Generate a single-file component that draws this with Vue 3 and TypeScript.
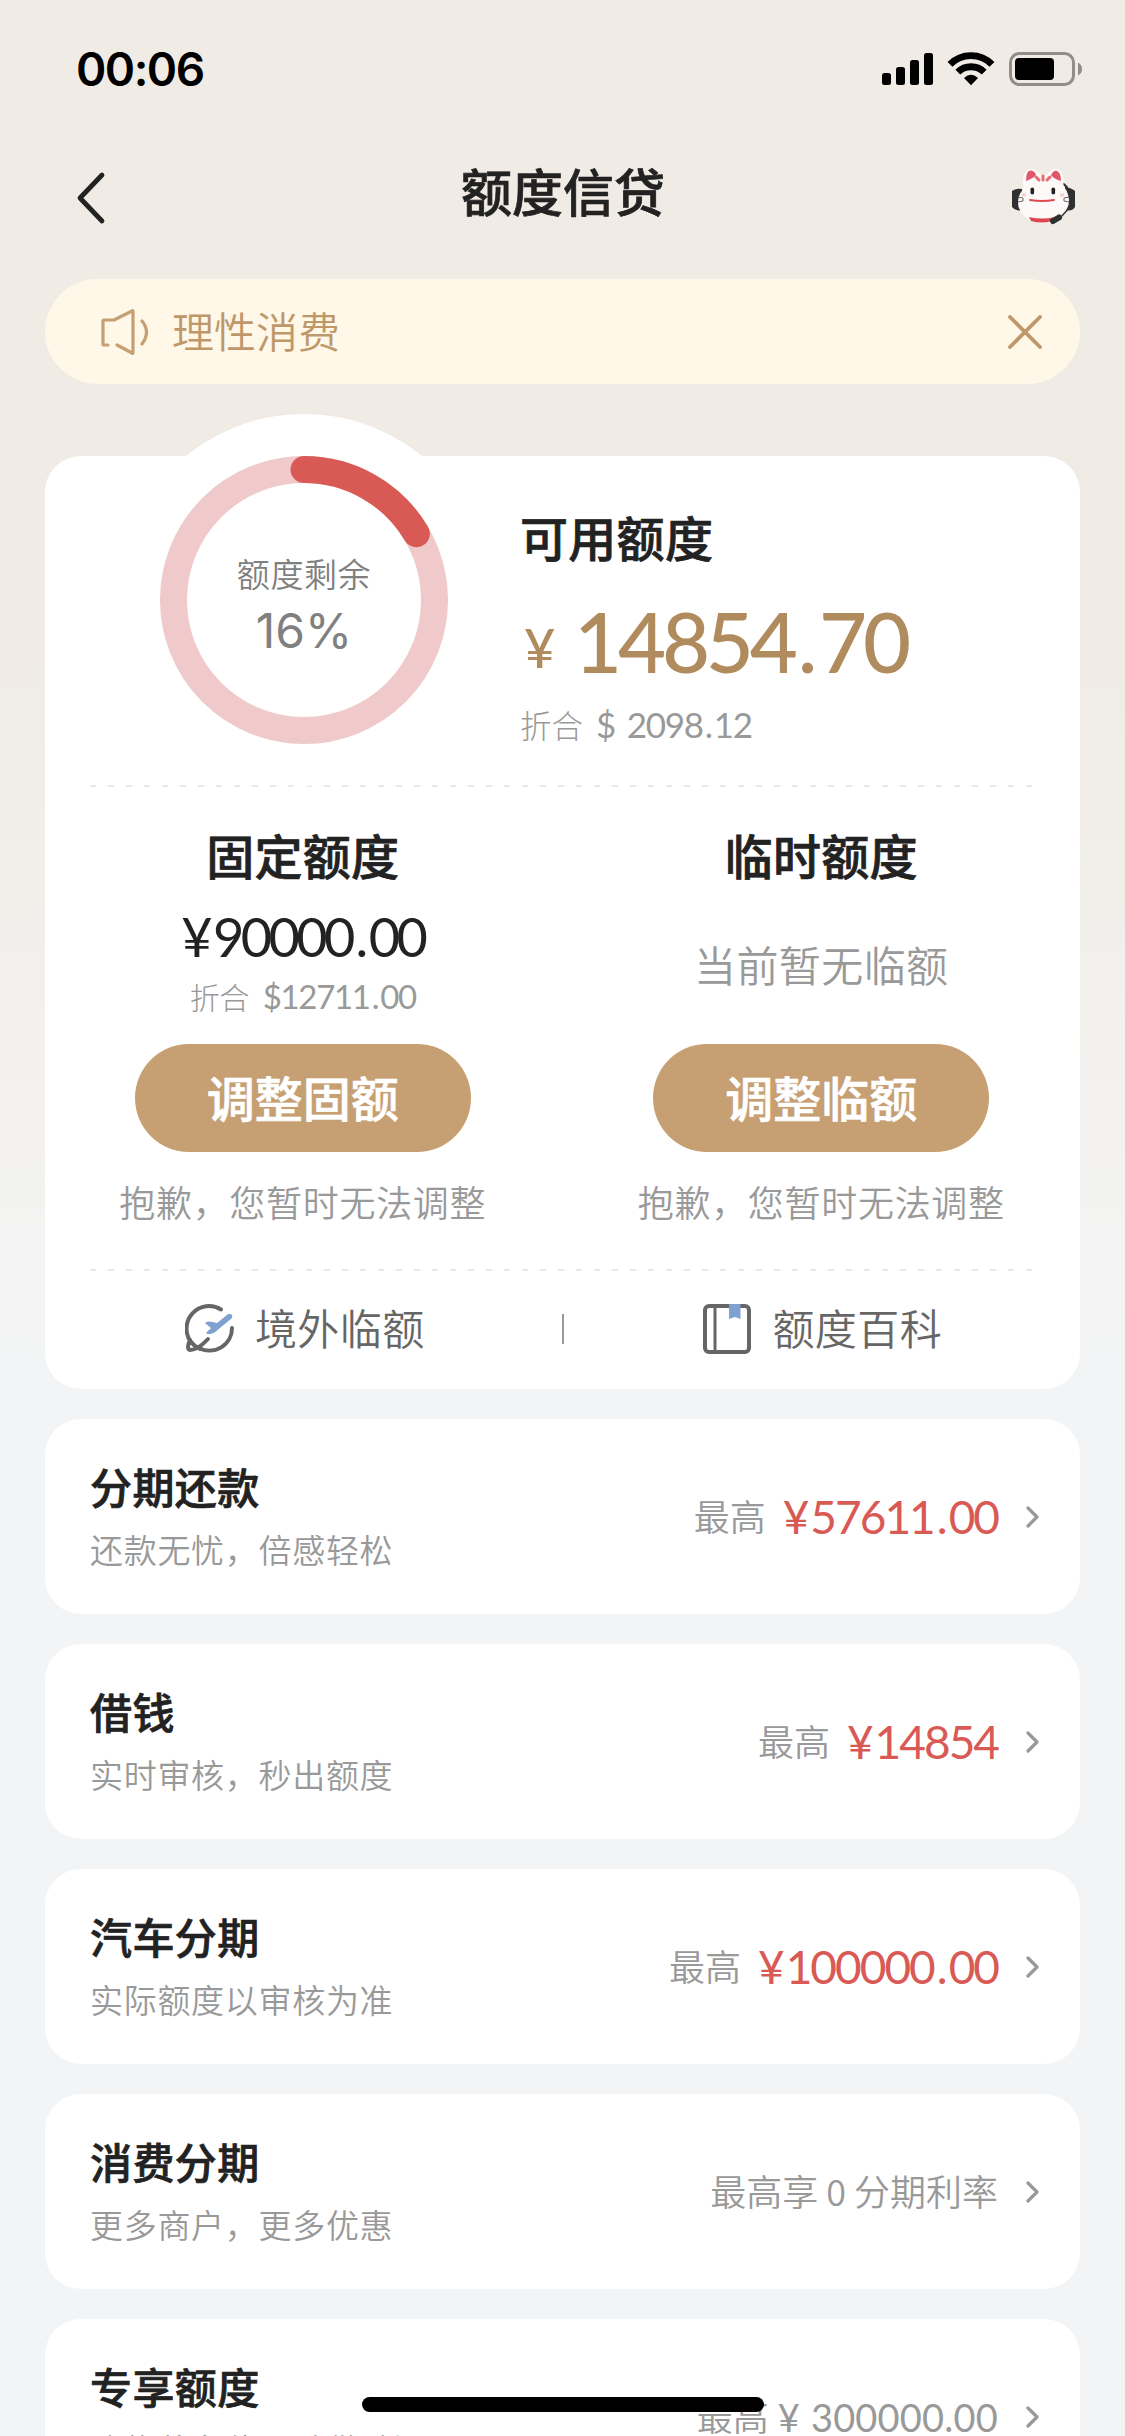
<script setup lang="ts">
interface Product {
  title: string
  desc: string
  label: string
  amount?: string[]
  muted?: boolean
}

const products: Product[] = [
  { title: '分期还款', desc: '还款无忧，倍感轻松', label: '最高', amount: ['57611', '00'] },
  { title: '借钱', desc: '实时审核，秒出额度', label: '最高', amount: ['14854'] },
  { title: '汽车分期', desc: '实际额度以审核为准', label: '最高', amount: ['100000', '00'] },
  { title: '消费分期', desc: '更多商户，更多优惠', label: '最高享 0 分期利率' },
  { title: '专享额度', desc: '购物装车位，随借随还', label: '最高', amount: ['300000', '00'], muted: true },
]

const radius = 130.5
const circumference = 2 * Math.PI * radius
const remaining = 0.165
</script>

<template>
  <div class="screen">
    <div class="status">
      <span class="time">00:06</span>
      <svg class="status-icons" width="202" height="36" viewBox="0 0 202 36">
        <rect x="0" y="21" width="9" height="12" rx="2.5" />
        <rect x="14" y="15" width="9" height="18" rx="2.5" />
        <rect x="28" y="8" width="9" height="25" rx="2.5" />
        <rect x="42" y="1" width="9" height="32" rx="2.5" />
        <g fill="none" stroke="#000" stroke-width="6.800">
          <path d="M68 12.300A29.700 29.700 0 0 1 110 12.300" />
          <path d="M75.800 20.200A18.700 18.700 0 0 1 102.200 20.200" />
        </g>
        <path d="M82 26Q89 19.500 96 26L89 33.200Z" />
        <rect x="128.500" y="1.500" width="63" height="31" rx="9" fill="none" stroke="#918e8a" stroke-width="3" />
        <rect x="133" y="6" width="39" height="22" rx="4" />
        <path d="M196 10.500Q200 12.500 200 17T196 23.500Z" fill="#918e8a" />
      </svg>
    </div>

    <header class="nav">
      <svg width="30" height="54" viewBox="0 0 30 54" fill="none" stroke="#222" stroke-width="4.800" stroke-linecap="round" stroke-linejoin="round">
        <path d="M26 4L4 27L26 50" />
      </svg>
      <h1>额度信贷</h1>
      <svg class="cat" width="64" height="58" viewBox="0 0 64 58">
        <path d="M0 22Q4 19 10 20V41Q4 43 0 38Z" fill="#303032" />
        <path d="M63 22Q60 19 53 18V41Q60 43 63 38Z" fill="#303032" />
        <path d="M50 14Q56 17 57 25" stroke="#303032" stroke-width="2" fill="none" />
        <path d="M12 20Q10 0 19 0Q25 1 29 7H34Q38 1 44 0Q52 1 51 17Q58 26 56 36Q51 53 31 54Q12 53 7 38Q5 27 12 20Z" fill="#fcf9f8" stroke="#fffdfc" />
        <path d="M14 12Q14 1 19 1.500Q23 2 24 6Q22 9 14 12Z" fill="#e0566a" />
        <path d="M39 6Q41 2 44 1.500Q49 3 49 12Q42 10 39 6Z" fill="#e0566a" />
        <path d="M24 8L27 11M31 7V11M38 8L35 11" stroke="#e66c72" stroke-width="3" stroke-linecap="round" />
        <rect x="18.500" y="18.500" width="3.600" height="7" rx="1.800" fill="#222" />
        <rect x="39.500" y="18.500" width="3.600" height="7" rx="1.800" fill="#222" />
        <path d="M18 31Q30 33 42 31" stroke="#dd4b52" stroke-width="2" fill="none" stroke-linecap="round" />
        <path d="M10 26h4M48 26h4" stroke="#f7cfcc" stroke-width="3" />
        <path d="M6 28L11 29V32L6 33M57 28L52 29V32L57 33" stroke="#666" stroke-width="1" fill="none" />
        <path d="M17 48Q30 51 43 48L40 52Q30 55 19 52Z" fill="#e0444f" />
        <path d="M58 38L48 49" stroke="#333" stroke-width="1.500" />
        <path d="M41 52L47 48.500" stroke="#303032" stroke-width="6" stroke-linecap="round" />
      </svg>
    </header>

    <div class="notice">
      <svg width="50" height="48" viewBox="0 0 50 48" fill="none" stroke="#c6a073" stroke-width="3.200" stroke-linecap="round" stroke-linejoin="round">
        <path d="M7 37H3Q2 37 2 36V13Q2 12 3 12H13L31 3Q32 2 32 4V44Q32 46 31 45L16 37" />
        <path d="M41 13Q50 24 41 36" />
      </svg>
      <span class="notice-text">理性消费</span>
      <svg width="34" height="34" viewBox="0 0 34 34" fill="none" stroke="#bf986a" stroke-width="3.800" stroke-linecap="round">
        <path d="M2 2L32 32M32 2L2 32" />
      </svg>
    </div>

    <section class="quota">
      <div class="summary">
        <div class="ring">
          <svg width="372" height="372" viewBox="0 0 372 372">
            <circle cx="186" cy="186" r="186" fill="#fff" />
            <circle cx="186" cy="186" :r="radius" fill="none" stroke="#f0cacb" stroke-width="27" />
            <circle
              cx="186" cy="186" :r="radius" fill="none" stroke="#d95a55" stroke-width="27" stroke-linecap="round"
              :stroke-dasharray="`${circumference * remaining} ${circumference}`" transform="rotate(-90 186 186)"
            />
          </svg>
          <div class="ring-text">
            <span class="ring-label">额度剩余</span>
            <span class="ring-value">16%</span>
          </div>
        </div>
        <div class="available">
          <h2>可用额度</h2>
          <div class="total"><span class="yen">¥</span><span class="total-num">14854<span class="dot">.</span>70</span></div>
          <div class="convert"><span class="thin">折合</span><span class="usd">$ 2098<span class="dot">.</span>12</span></div>
        </div>
      </div>

      <div class="dash"></div>

      <div class="columns">
        <div class="column">
          <h2>固定额度</h2>
          <div class="fixed-amount"><span class="sign">¥</span>90000<span class="dot">.</span>00</div>
          <div class="fixed-convert"><span class="thin">折合</span><span class="usd">$12711<span class="dot">.</span>00</span></div>
          <button>调整固额</button>
          <p>抱歉，您暂时无法调整</p>
        </div>
        <div class="column">
          <h2>临时额度</h2>
          <div class="empty">当前暂无临额</div>
          <button>调整临额</button>
          <p>抱歉，您暂时无法调整</p>
        </div>
      </div>

      <div class="dash"></div>

      <div class="links">
        <div class="link">
          <svg width="50" height="52" viewBox="0 0 50 52" fill="none" stroke="#666" stroke-width="4" stroke-linecap="round">
            <path d="M36 6.500A22.500 22.500 0 0 0 6 39M14 45A22.500 22.500 0 0 0 47 25" />
            <path d="M5 37Q1 46 5 47Q13 47 23 36M6 39Q9 43 15 46" />
            <path d="M43 12Q48 11 46 15L29 29Q26 31 22 30L27 25L21 20Q24 18 32 21L43 12Z" fill="#7fa1d0" stroke="#7fa1d0" stroke-width="1.500" stroke-linejoin="round" />
          </svg>
          <span>境外临额</span>
        </div>
        <i class="divider"></i>
        <div class="link">
          <svg width="50" height="52" viewBox="0 0 50 52" fill="none" stroke="#666" stroke-width="4">
            <rect x="3" y="3" width="44" height="46" rx="4" />
            <path d="M13 3V49" stroke-width="3" />
            <path d="M27 1H38.500V16L33 14L27 16Z" fill="#7fa1d0" stroke="none" />
          </svg>
          <span>额度百科</span>
        </div>
      </div>
    </section>

    <article v-for="p in products" :key="p.title" class="product">
      <div class="product-main">
        <h3>{{ p.title }}</h3>
        <div class="desc">{{ p.desc }}</div>
      </div>
      <span class="label">{{ p.label }}</span>
      <span v-if="p.amount" class="amount" :class="{ muted: p.muted }"><span class="sign">¥</span>{{ p.amount[0] }}<template v-if="p.amount[1]"><span class="dot">.</span>{{ p.amount[1] }}</template></span>
      <svg width="14" height="22" viewBox="0 0 14 22" fill="none" stroke="#999" stroke-width="3.200" stroke-linecap="round" stroke-linejoin="round">
        <path d="M2 2L11 11L2 20" />
      </svg>
    </article>

    <div class="home-bar"></div>
  </div>
</template>

<style>
body {
  margin: 0;
  background: #f2f4f6;
}
</style>

<style scoped>
.screen {
  position: relative;
  box-sizing: border-box;
  width: 1125px;
  height: 2436px;
  padding: 0 45px;
  overflow: hidden;
  display: flex;
  flex-direction: column;
  background: linear-gradient(#f0ece5 0, #f0ece5 650px, #f4f4f4 1300px, #f2f4f6 1420px);
  color: #222;
  font-family: "Noto Sans CJK SC", sans-serif;
  font-weight: 350;
}
.screen > * {
  flex-shrink: 0;
}
h1, h2, h3, p {
  margin: 0;
}
h1, h2, h3, button {
  -webkit-text-stroke: 0.7px currentColor;
}
.status {
  display: flex;
  justify-content: space-between;
  align-items: center;
  height: 138px;
  padding-left: 31px;
}
.time {
  color: #000;
  font: 600 46px/60px Inter, sans-serif;
  letter-spacing: -1.5px;
}
.status-icons {
  margin-right: -4px;
  margin-top: 2px;
}
.nav {
  display: flex;
  align-items: center;
  justify-content: space-between;
  height: 120px;
  padding: 0 4px 0 31px;
}
h1 {
  font-size: 51px;
  line-height: 60px;
  font-weight: 500;
  margin-left: 8px;
  margin-top: -17px;
}
.notice {
  display: flex;
  align-items: center;
  height: 105px;
  margin-top: 21px;
  padding: 0 38px 0 56px;
  border-radius: 53px;
  background: #fff7e8;
}
.notice-text {
  flex: 1;
  margin-left: 21px;
  margin-top: -4px;
  color: #bf986a;
  font-size: 42px;
  line-height: 50px;
}
.quota {
  margin-top: 72px;
  height: 933px;
  border-radius: 36px;
  background: #fff;
}
.summary {
  display: flex;
  height: 329px;
}
.ring {
  position: relative;
  width: 372px;
  height: 372px;
  margin: -42px 0 0 73px;
}
.ring svg {
  display: block;
}
.ring-text {
  position: absolute;
  inset: 0;
  display: flex;
  flex-direction: column;
  align-items: center;
  padding-top: 134px;
  color: #808080;
}
.ring-label {
  font-size: 33px;
  line-height: 50px;
  letter-spacing: 0.6px;
}
.ring-value {
  font: 400 48px/56px Inter, sans-serif;
  margin-top: 5px;
}
.available {
  margin-left: 30px;
  padding-top: 50px;
}
h2 {
  font-size: 48px;
  line-height: 60px;
  font-weight: 500;
  letter-spacing: 0.3px;
}
.total {
  display: flex;
  height: 100px;
  margin-top: 25px;
  color: #b08b5e;
  font-family: Lato, sans-serif;
  font-weight: 500;
}
.yen {
  width: 50px;
  padding-left: 4px;
  font-size: 54px;
  line-height: 113px;
}
.total-num {
  font-size: 83px;
  line-height: 100px;
  letter-spacing: -4.200px;
}
.total-num .dot {
  margin: 0 6px 0 4px;
}
.convert,
.fixed-convert {
  display: flex;
  align-items: baseline;
  color: #999;
}
.convert {
  margin-top: 11px;
}
.thin {
  font-size: 31.500px;
  line-height: 44px;
  font-weight: 300;
}
.usd {
  margin-left: 13px;
  font: 400 35px/44px Lato, sans-serif;
  letter-spacing: -1.300px;
  word-spacing: 4px;
}
.usd .dot {
  margin: 0 2px;
}
.dash {
  height: 2px;
  margin: 0 45px;
  background: repeating-linear-gradient(90deg, #e8e8e8 0 6px, transparent 6px 18px);
}
.columns {
  display: flex;
  height: 482px;
}
.column {
  flex: 1;
  display: flex;
  flex-direction: column;
  align-items: center;
  padding-top: 37px;
}
.column:first-child {
  margin-left: -1px;
  padding-right: 1px;
}
.fixed-amount {
  height: 60px;
  margin-top: 23px;
  font: 400 54px/60px Lato, sans-serif;
  letter-spacing: -3.600px;
}
.fixed-amount .sign {
  margin-right: 4px;
}
.fixed-amount .dot {
  margin: 0 4px;
}
.fixed-convert {
  height: 44px;
  margin-top: 7px;
  margin-bottom: 26px;
}
.fixed-convert .thin {
  font-size: 30px;
}
.fixed-convert .usd {
  font-size: 33px;
}
.empty {
  height: 60px;
  margin-top: 50px;
  margin-bottom: 50px;
  color: #999;
  font-size: 42px;
  line-height: 60px;
  letter-spacing: 0.4px;
}
button {
  width: 336px;
  height: 108px;
  padding: 0 0 4px;
  border: 0;
  border-radius: 54px;
  background: #c6a073;
  color: #fff;
  font: 500 48px/104px "Noto Sans CJK SC", sans-serif;
}
p {
  margin-top: 24px;
  color: #999;
  font-size: 36px;
  line-height: 50px;
  letter-spacing: 0.7px;
}
.links {
  display: flex;
  align-items: center;
  height: 116px;
}
.link {
  flex: 1;
  display: flex;
  align-items: center;
  justify-content: center;
  gap: 20px;
  color: #666;
  font-size: 42px;
  line-height: 60px;
  letter-spacing: 0.4px;
}
.link svg {
  margin-left: 2px;
}
.link span {
  margin-top: -4px;
}
.divider {
  width: 2px;
  height: 30px;
  margin: 0 -1px;
  background: #999;
}
.product {
  box-sizing: border-box;
  display: flex;
  align-items: center;
  height: 195px;
  margin-top: 30px;
  padding: 0 40px 0 45px;
  border-radius: 36px;
  background: #fff;
}
.product-main {
  flex: 1;
  margin-top: -3px;
}
h3 {
  font-size: 42px;
  line-height: 60px;
  font-weight: 500;
  letter-spacing: 0.4px;
}
.desc {
  color: #999;
  font-size: 33px;
  line-height: 50px;
  margin-top: 8px;
  letter-spacing: 0.7px;
}
.label {
  margin-top: -4px;
  color: #999;
  font-size: 36px;
  line-height: 50px;
}
.amount {
  margin-left: 17px;
  color: #d95a55;
  font: 400 46px/50px Lato, sans-serif;
  letter-spacing: -2px;
}
.amount .sign {
  margin-right: 3px;
}
.amount .dot {
  margin: 0 3px;
}
.amount.muted {
  margin-left: 9px;
  color: #999;
  font-size: 38px;
  letter-spacing: 0.2px;
}
.muted .sign {
  margin-right: 11px;
}
.muted .dot {
  margin: 0;
}
.product > svg {
  margin-left: 28px;
}
.home-bar {
  position: absolute;
  left: 362px;
  bottom: 24px;
  width: 402px;
  height: 15px;
  border-radius: 8px;
  background: #000;
}
</style>
